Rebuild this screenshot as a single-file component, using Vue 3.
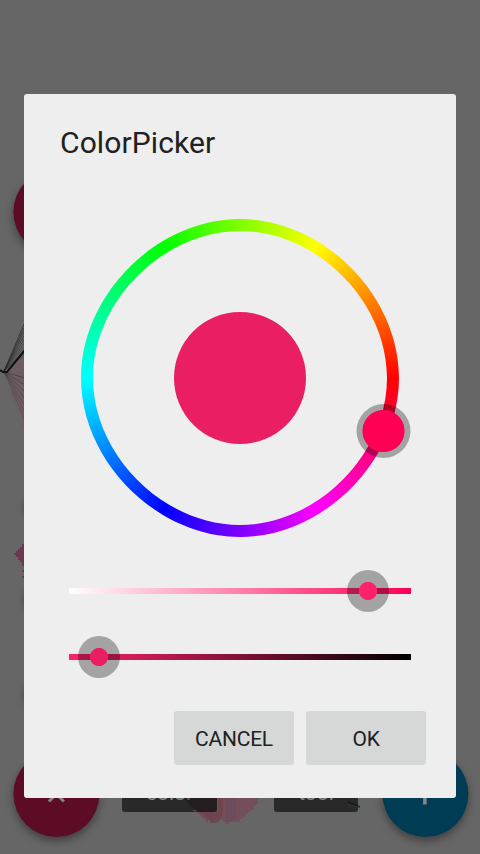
<script setup>
const strands = Array.from({ length: 9 }, (_, i) => ({ y: 322 + i * 4, o: 0.85 - i * 0.05 }))
const lower = Array.from({ length: 7 }, (_, i) => ({ y: 378 + i * 7, o: 0.6 - i * 0.06 }))
</script>

<template>
  <main class="screen">
    <svg class="sketch" viewBox="0 0 480 854" aria-hidden="true">
      <path d="M5 372 L30 345 V426 H22 V416 L16 406 L11 396 L12 386Z" fill="#785060" opacity=".4" />
      <g stroke="#262626" stroke-width=".8" fill="none">
        <line v-for="s in strands" :key="'u' + s.y" x1="4" y1="371" x2="25" :y2="s.y" :opacity="s.o" />
        <line v-for="s in lower" :key="'l' + s.y" x1="4" y1="372" x2="25" :y2="s.y" :opacity="s.o" />
        <path d="M0 370 L3 372 H7 L25 350" stroke="#111" stroke-width="2" />
      </g>
      <path d="M14 553h2v-2h2v-2h2v-2h2v-3h4v22h-4v-4h-2v-2h-2v-3h-2v-2h-2z M22 570h3v2h-3z M22 576h3v2h-3z" fill="#693950" />
    </svg>

    <div class="fab pink top"></div>
    <i class="glow g1"></i><i class="glow g2"></i><i class="glow g3"></i>
    <footer class="tools">
      <div class="fab pink">
        <svg viewBox="0 0 86 86"><path d="M35.500 50.500 L43 43 L50.500 50.500" stroke="#858585" stroke-width="3" fill="none" /></svg>
      </div>
      <span class="label color">color</span>
      <span class="label tool">tool</span>
      <div class="fab blue">
        <svg viewBox="0 0 86 86"><path d="M42.500 32V53.500" stroke="#858585" stroke-width="3.600" /></svg>
      </div>
    </footer>
    <svg class="sketch" viewBox="0 0 480 854" aria-hidden="true">
      <path d="M183 796 H217 V812 H197 L190 806Z" fill="#200c14" opacity=".35" />
      <path d="M197 812H217V796H258V804h-2v2h-2v4h-3v2h-3v2h-2v3h-3v2h-3v3h-4v-2h-3v2h-4v2h-3v-2h-3v-2h-3v2h-3v-2h-3v2h-4v-2h-2v2h-2v-2h-2v-2h-2v-2h-2v-2h-2v-2h-2v-2h-4z" fill="#754e5b" />
      <path d="M197 812H218V796H223V814L217 823h-7v-3h-3v-3h-3v-3z" fill="#6b4048" opacity=".7" />
      <path d="M225 796h11v26h-11z" fill="#684d5c" opacity=".6" />
      <path d="M348 802 L360 807" stroke="#181818" stroke-width="1.500" />
      <path d="M348 805 L360 807" stroke="#1b421d" stroke-width=".8" />
    </svg>

    <section class="dialog" role="dialog">
      <h1>ColorPicker</h1>
      <div class="wheel">
        <div class="hues"></div>
        <div class="preview"></div>
        <div class="hue-thumb"></div>
      </div>
      <div class="slider saturation"><div class="thumb"></div></div>
      <div class="slider value"><div class="thumb"></div></div>
      <div class="actions">
        <button>CANCEL</button>
        <button>OK</button>
      </div>
    </section>
  </main>
</template>

<style>
body { margin: 0; background: #666; }
</style>

<style scoped>
.screen { position: relative; width: 480px; height: 854px; overflow: hidden; background: #666; padding: 94px 24px 56px; box-sizing: border-box; font-family: Roboto, sans-serif; }
.sketch { position: absolute; left: 0; top: 0; width: 480px; height: 854px; }
.fab { width: 86px; height: 86px; flex: none; border-radius: 50%; box-shadow: 0 4px 9px rgba(0, 0, 0, .38); transform: translateX(.4px); }
.fab svg { display: block; width: 86px; height: 86px; }
.pink { background: #5d0c26; }
.blue { background: #003c53; }
.top { position: absolute; left: 13px; top: 169px; }
.glow { position: absolute; left: 25px; width: 40px; height: 28px; border-radius: 50%; box-shadow: 0 2px 8px rgba(0, 0, 0, .4); }
.g1 { top: 492px; }
.g2 { top: 584px; }
.g3 { top: 679px; }
.tools { position: absolute; left: 13px; top: 751px; width: 456px; height: 86px; display: flex; }
.label { box-sizing: border-box; height: 35px; margin-top: 26px; border-radius: 3px; background: #292929; color: #8a8a8a; font-size: 21px; line-height: 33px; text-align: center; }
.color { width: 95px; margin-left: 23px; }
.tool { width: 84px; margin-left: 57px; margin-right: 24px; }
.dialog { position: relative; box-sizing: border-box; width: 432px; height: 704px; border-radius: 3px; background: #eee; display: flex; flex-direction: column; }
h1 { margin: 31px 36px 0; height: 36px; font-size: 30px; line-height: 36px; font-weight: 400; letter-spacing: .1px; color: #212121; }
.wheel { position: relative; width: 318px; height: 318px; margin: 58px 57px 0; display: grid; place-items: center; }
.hues, .preview { grid-area: 1 / 1; }
.hues { width: 318px; height: 318px; background: conic-gradient(from 90deg, #f00, #f0f, #00f, #0ff, #0f0, #ff0, #f00); clip-path: path(evenodd, "M318 159 C318 242.100 242.100 318 159 318 C75.900 318 0 242.100 0 159 C0 75.900 75.900 0 159 0 C242.100 0 318 75.900 318 159 Z M306 159 C306 235.800 235.800 306 159 306 C82.200 306 12 235.800 12 159 C12 82.200 82.200 12 159 12 C235.800 12 306 82.200 306 159 Z"); }
.preview { width: 132px; height: 132px; border-radius: 50%; background: #e91e63; }
.hue-thumb { position: absolute; left: 275px; top: 185px; width: 54px; height: 54px; border-radius: 50%; background: radial-gradient(circle, #ff0055 20.700px, rgba(0, 0, 0, .314) 21.400px); transform: translateX(.5px); }
.slider { width: 342px; height: 6px; margin-left: 45px; display: flex; align-items: center; }
.saturation { margin-top: 51px; background: linear-gradient(90deg, #fff, #ff0055); }
.value { margin-top: 60px; background: linear-gradient(90deg, #ff216c, #000); }
.thumb { width: 42px; height: 42px; flex: none; border-radius: 50%; }
.saturation .thumb { margin-left: 278px; background: radial-gradient(circle, #ff216c 8.700px, rgba(0, 0, 0, .314) 9.400px); }
.value .thumb { margin-left: 9px; background: radial-gradient(circle, #e91e63 8.700px, rgba(0, 0, 0, .314) 9.400px); }
.actions { display: flex; justify-content: flex-end; gap: 12px; margin: 51px 30px 0; }
button { width: 120px; height: 54px; border: 0; border-radius: 3px; padding: 1px 0 0; background: #d6d8d7; color: #212121; font: 400 21px/24px Roboto, sans-serif; letter-spacing: -.25px; }
</style>
